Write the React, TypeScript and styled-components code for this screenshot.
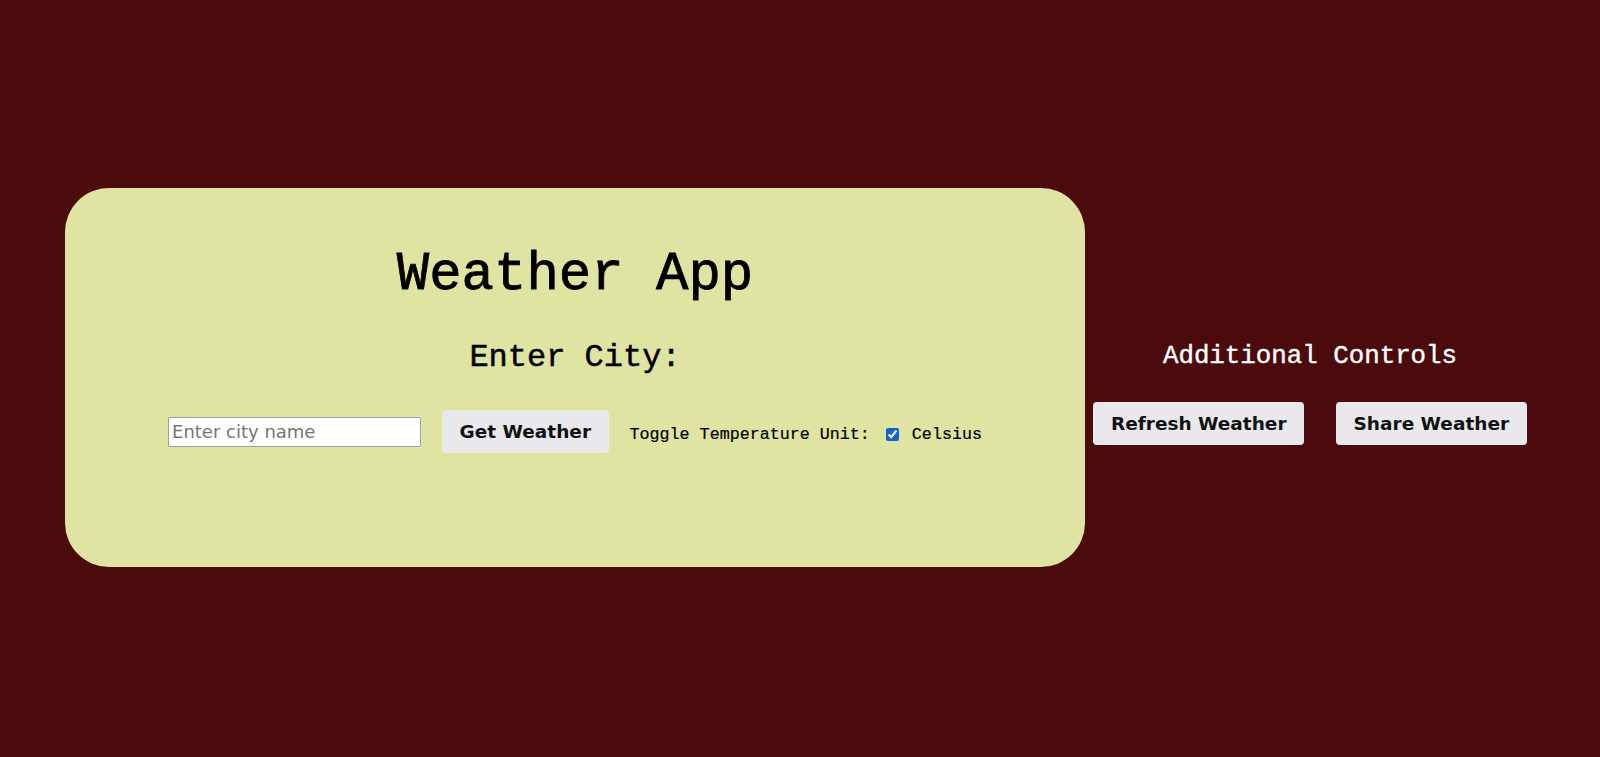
import React, { useState } from "react";
import styled, { createGlobalStyle } from "styled-components";

const GlobalStyle = createGlobalStyle`
  html, body {
    margin: 0;
    padding: 0;
    background: #4b0a0c;
  }
  body {
    font-family: "Liberation Mono", "DejaVu Sans Mono", monospace;
  }
`;

const Page = styled.div`
  display: flex;
  align-items: flex-start;
  min-height: 757px;
  box-sizing: border-box;
  padding: 188px 0 0 65px;
  background: #4b0a0c;
`;

const Card = styled.div`
  width: 1020px;
  height: 379px;
  box-sizing: border-box;
  background: #e0e4a2;
  border-radius: 44px;
  padding-top: 60px;
  display: flex;
  flex-direction: column;
  align-items: center;
`;

const Title = styled.h1`
  margin: 0;
  font-family: "Liberation Mono", "DejaVu Sans Mono", monospace;
  font-weight: normal;
  font-size: 54px;
  line-height: 54px;
  color: #000;
  -webkit-text-stroke: 0.8px #000;
`;

const SubTitle = styled.h2`
  margin: 40px 0 0;
  font-family: "Liberation Mono", "DejaVu Sans Mono", monospace;
  font-weight: normal;
  font-size: 32px;
  line-height: 32px;
  color: #000;
  -webkit-text-stroke: 0.5px #000;
`;

const Row = styled.div`
  margin-top: 36px;
  display: flex;
  align-items: center;
  gap: 21px;
`;

const CityInput = styled.input`
  width: 253px;
  height: 30px;
  box-sizing: border-box;
  border: 1px solid #a0a0a0;
  border-radius: 2px;
  padding: 0 3px;
  background: #fff;
  font-family: "DejaVu Sans", sans-serif;
  font-size: 18px;
  color: #000;
  &::placeholder {
    color: #767676;
  }
`;

const Button = styled.button`
  border: none;
  border-radius: 4px;
  background: #e9e9ed;
  color: #111;
  font-family: "DejaVu Sans", sans-serif;
  font-weight: bold;
  font-size: 18.5px;
  line-height: 21px;
  padding: 11px 17.5px;
  cursor: pointer;
  white-space: nowrap;
`;

const Toggle = styled.label`
  display: flex;
  align-items: center;
  font-family: "Liberation Mono", "DejaVu Sans Mono", monospace;
  font-size: 16.7px;
  color: #000;
  white-space: nowrap;
  padding-top: 5px;
  -webkit-text-stroke: 0.2px #000;
`;

const Check = styled.input`
  width: 13px;
  height: 13px;
  margin: 0 13px 0 16px;
  accent-color: #1660d0;
`;

const Controls = styled.div`
  width: 450px;
  box-sizing: border-box;
  padding: 156px 10px 0;
  display: flex;
  flex-direction: column;
  align-items: center;
`;

const ControlsTitle = styled.h3`
  margin: 0;
  font-family: "Liberation Mono", "DejaVu Sans Mono", monospace;
  font-weight: normal;
  font-size: 25.8px;
  line-height: 26px;
  color: #fff;
  -webkit-text-stroke: 0.4px #fff;
`;

const ButtonRow = styled.div`
  margin-top: 32px;
  display: flex;
  gap: 32px;
`;

export default function App() {
  const [celsius, setCelsius] = useState(true);
  const [city, setCity] = useState("");
  return (
    <>
      <GlobalStyle />
      <Page>
        <Card>
          <Title>Weather App</Title>
          <SubTitle>Enter City:</SubTitle>
          <Row>
            <CityInput
              placeholder="Enter city name"
              value={city}
              onChange={(e) => setCity(e.target.value)}
            />
            <Button>Get Weather</Button>
            <Toggle>
              <span>Toggle Temperature Unit:</span>
              <Check
                type="checkbox"
                checked={celsius}
                onChange={() => setCelsius(!celsius)}
              />
              <span>Celsius</span>
            </Toggle>
          </Row>
        </Card>
        <Controls>
          <ControlsTitle>Additional Controls</ControlsTitle>
          <ButtonRow>
            <Button>Refresh Weather</Button>
            <Button>Share Weather</Button>
          </ButtonRow>
        </Controls>
      </Page>
    </>
  );
}
